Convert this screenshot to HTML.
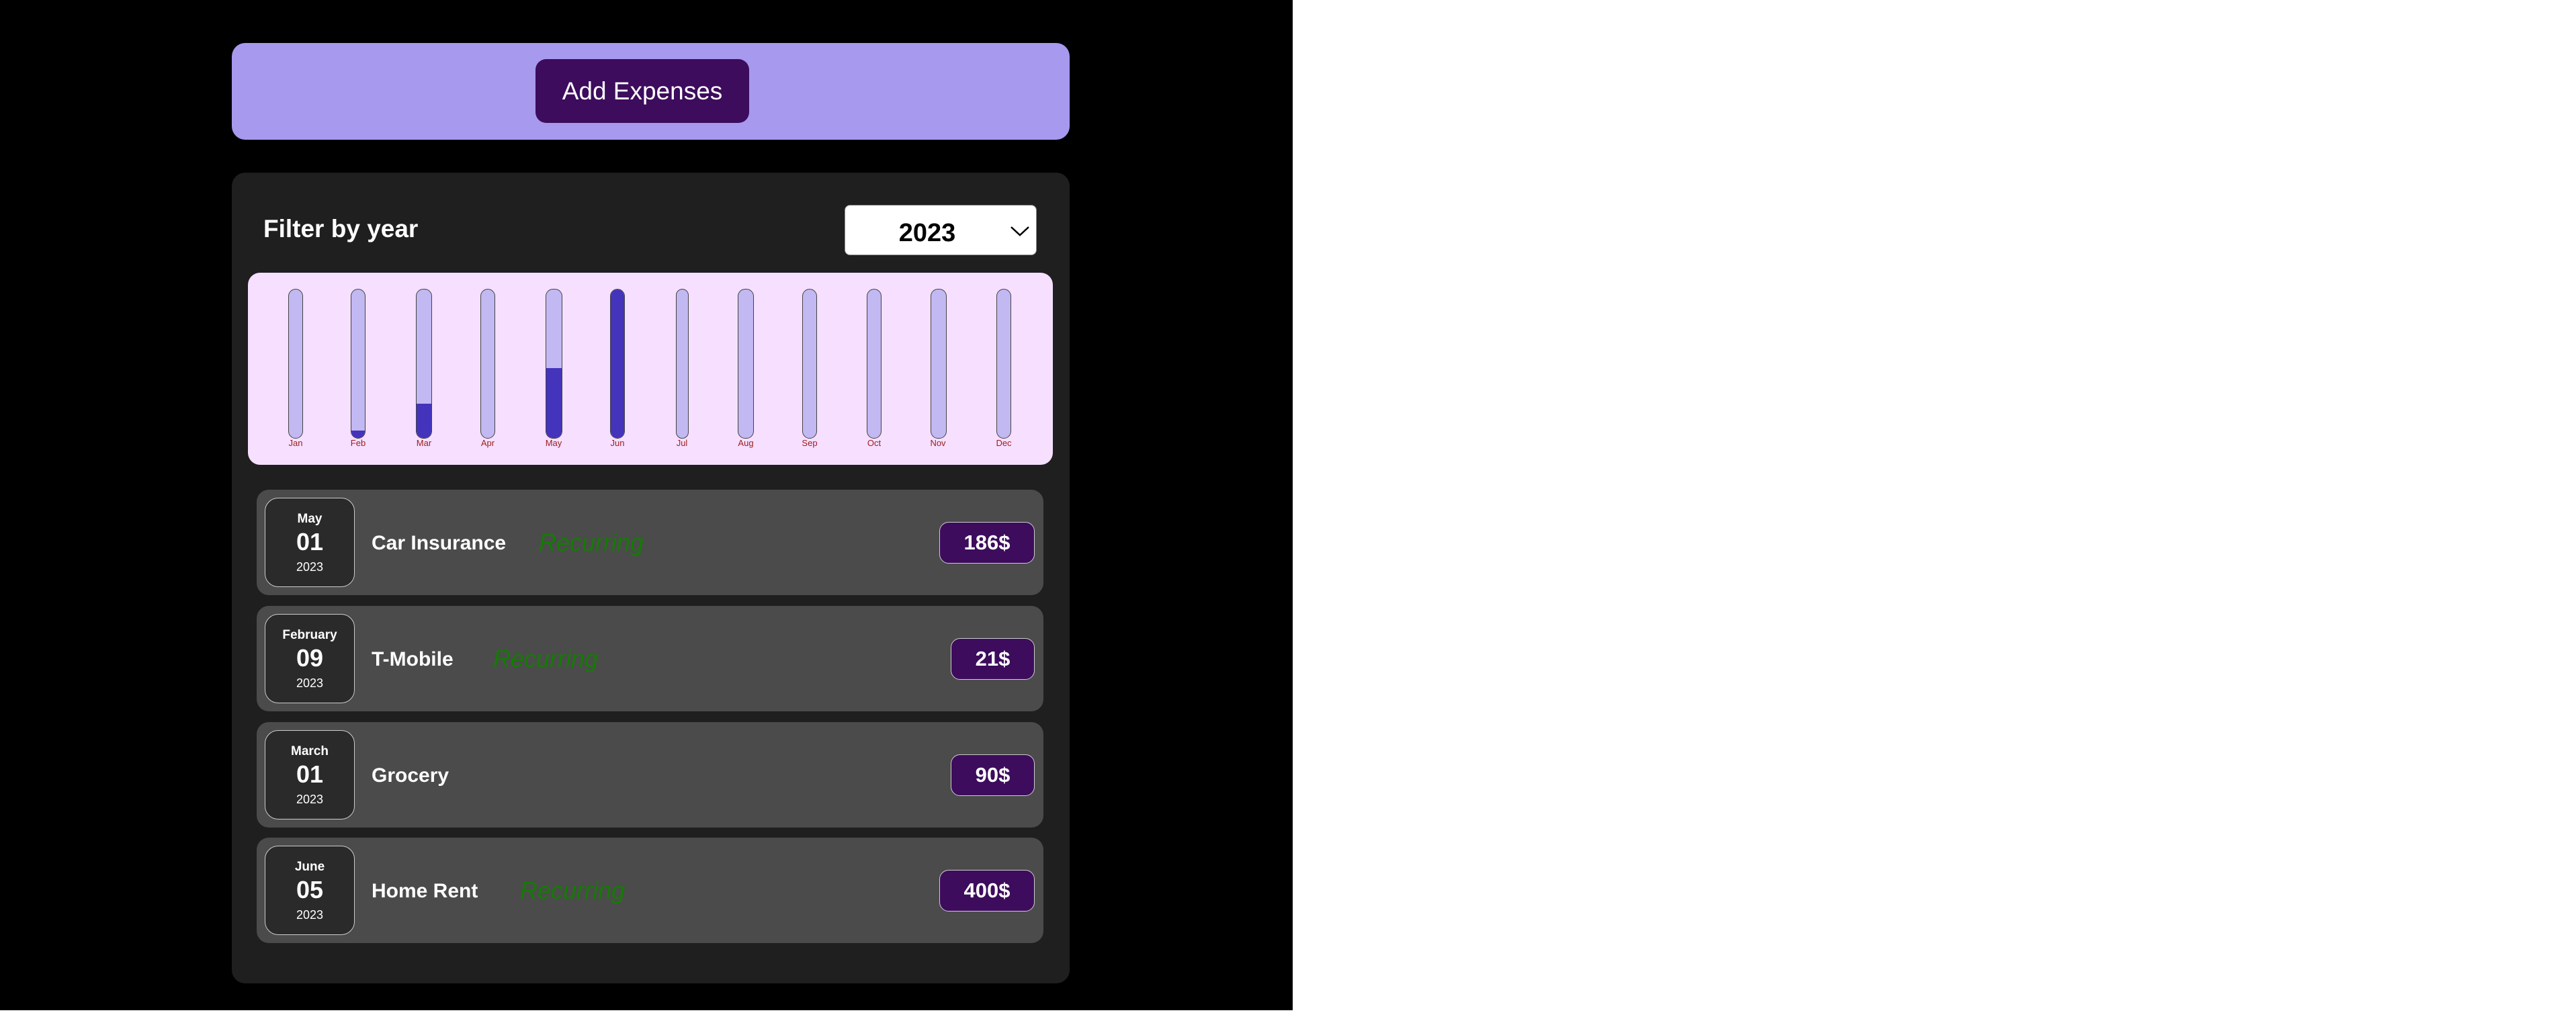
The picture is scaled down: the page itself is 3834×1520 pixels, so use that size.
<!DOCTYPE html>
<html><head><meta charset="utf-8"><style>
*{box-sizing:border-box;margin:0;padding:0}
body{width:3834px;height:1520px;background:#fff;font-family:"Liberation Sans",sans-serif;position:relative;overflow:hidden}
.black{position:absolute;left:0;top:0;width:1924px;height:1504px;background:#000}
.abs{position:absolute}
.top{left:345px;top:64px;width:1247px;height:144px;background:#a699ee;border-radius:20px}
.btn{left:797px;top:88px;width:318px;height:95px;background:#3d0c5c;border-radius:16px;color:#fff;font-size:37px;display:flex;align-items:center;justify-content:center}
.panel{left:345px;top:257px;width:1247px;height:1207px;background:#1f1f1f;border-radius:20px}
.filter{left:392px;top:320px;color:#fff;font-weight:bold;font-size:37px}
.sel{left:1257px;top:305px;width:286px;height:75px;background:#fff;border-radius:8px;border:1px solid #888}
.sel span{position:absolute;left:0;width:244px;top:20px;text-align:center;font-weight:bold;font-size:38px;color:#000}
.chart{left:369px;top:406px;width:1198px;height:286px;background:#f6dfff;border-radius:18px}
.bar{position:absolute;top:430px;height:223px;width:22px;border:1.5px solid #444;border-radius:11px;background:#c2b8f2;overflow:hidden}
.bar i{position:absolute;left:0;right:0;bottom:0;background:#4433bb}
.lab{position:absolute;top:652px;width:60px;text-align:center;font-size:13px;color:#9b1c1c}
.row{position:absolute;left:382px;width:1171px;height:157px;background:#4b4b4b;border-radius:18px}
.date{position:absolute;left:12px;top:12px;width:134px;height:133px;background:#2a2a2a;border:1.5px solid #ccc;border-radius:20px;color:#fff;text-align:center}
.date .m{position:absolute;top:20px;width:100%;font-weight:bold;font-size:19px}
.date .d{position:absolute;top:44px;width:100%;font-weight:bold;font-size:36px}
.date .y{position:absolute;top:92px;width:100%;font-size:18px}
.title{position:absolute;left:171px;top:63px;color:#fff;font-weight:bold;font-size:30px}
.rec{position:absolute;top:58px;color:#157a05;font-style:italic;font-size:36px}
.amt{position:absolute;right:13px;top:48px;height:62px;background:#3d0c5c;border:1.5px solid #ccc;border-radius:14px;color:#fff;font-weight:bold;font-size:31px;display:flex;align-items:center;justify-content:center}
</style></head><body>
<div class="black"></div>
<div class="abs top"></div>
<div class="abs btn">Add Expenses</div>
<div class="abs panel"></div>
<div class="abs filter">Filter by year</div>
<div class="abs sel"><span>2023</span>
<svg class="abs" style="left:246px;top:30px" width="28" height="16" viewBox="0 0 28 16"><path d="M1 2 L14 14 L27 2" fill="none" stroke="#000" stroke-width="2.5"/></svg></div>
<div class="abs chart"></div>

<div class="bar" style="left:429px"></div>
<div class="bar" style="left:522px"><i style="height:5%"></i></div>
<div class="bar" style="left:619px;width:24px"><i style="height:23%"></i></div>
<div class="bar" style="left:715px"></div>
<div class="bar" style="left:812px;width:25px"><i style="height:47%"></i></div>
<div class="bar" style="left:908px"><i style="height:100%"></i></div>
<div class="bar" style="left:1006px;width:19px"></div>
<div class="bar" style="left:1098px;width:24px"></div>
<div class="bar" style="left:1194px"></div>
<div class="bar" style="left:1290px"></div>
<div class="bar" style="left:1385px;width:24px"></div>
<div class="bar" style="left:1483px"></div>

<div class="lab" style="left:410px">Jan</div>
<div class="lab" style="left:503px">Feb</div>
<div class="lab" style="left:601px">Mar</div>
<div class="lab" style="left:696px">Apr</div>
<div class="lab" style="left:794px">May</div>
<div class="lab" style="left:889px">Jun</div>
<div class="lab" style="left:985px">Jul</div>
<div class="lab" style="left:1080px">Aug</div>
<div class="lab" style="left:1175px">Sep</div>
<div class="lab" style="left:1271px">Oct</div>
<div class="lab" style="left:1366px">Nov</div>
<div class="lab" style="left:1464px">Dec</div>

<div class="row" style="top:729px">
<div class="date"><div class="m">May</div><div class="d">01</div><div class="y">2023</div></div>
<div class="title">Car Insurance</div><div class="rec" style="left:420px">Recurring</div>
<div class="amt" style="width:142px">186$</div></div>

<div class="row" style="top:902px">
<div class="date"><div class="m">February</div><div class="d">09</div><div class="y">2023</div></div>
<div class="title">T-Mobile</div><div class="rec" style="left:352px">Recurring</div>
<div class="amt" style="width:125px">21$</div></div>

<div class="row" style="top:1075px">
<div class="date"><div class="m">March</div><div class="d">01</div><div class="y">2023</div></div>
<div class="title">Grocery</div>
<div class="amt" style="width:125px">90$</div></div>

<div class="row" style="top:1247px">
<div class="date"><div class="m">June</div><div class="d">05</div><div class="y">2023</div></div>
<div class="title">Home Rent</div><div class="rec" style="left:392px">Recurring</div>
<div class="amt" style="width:142px">400$</div></div>
</body></html>
